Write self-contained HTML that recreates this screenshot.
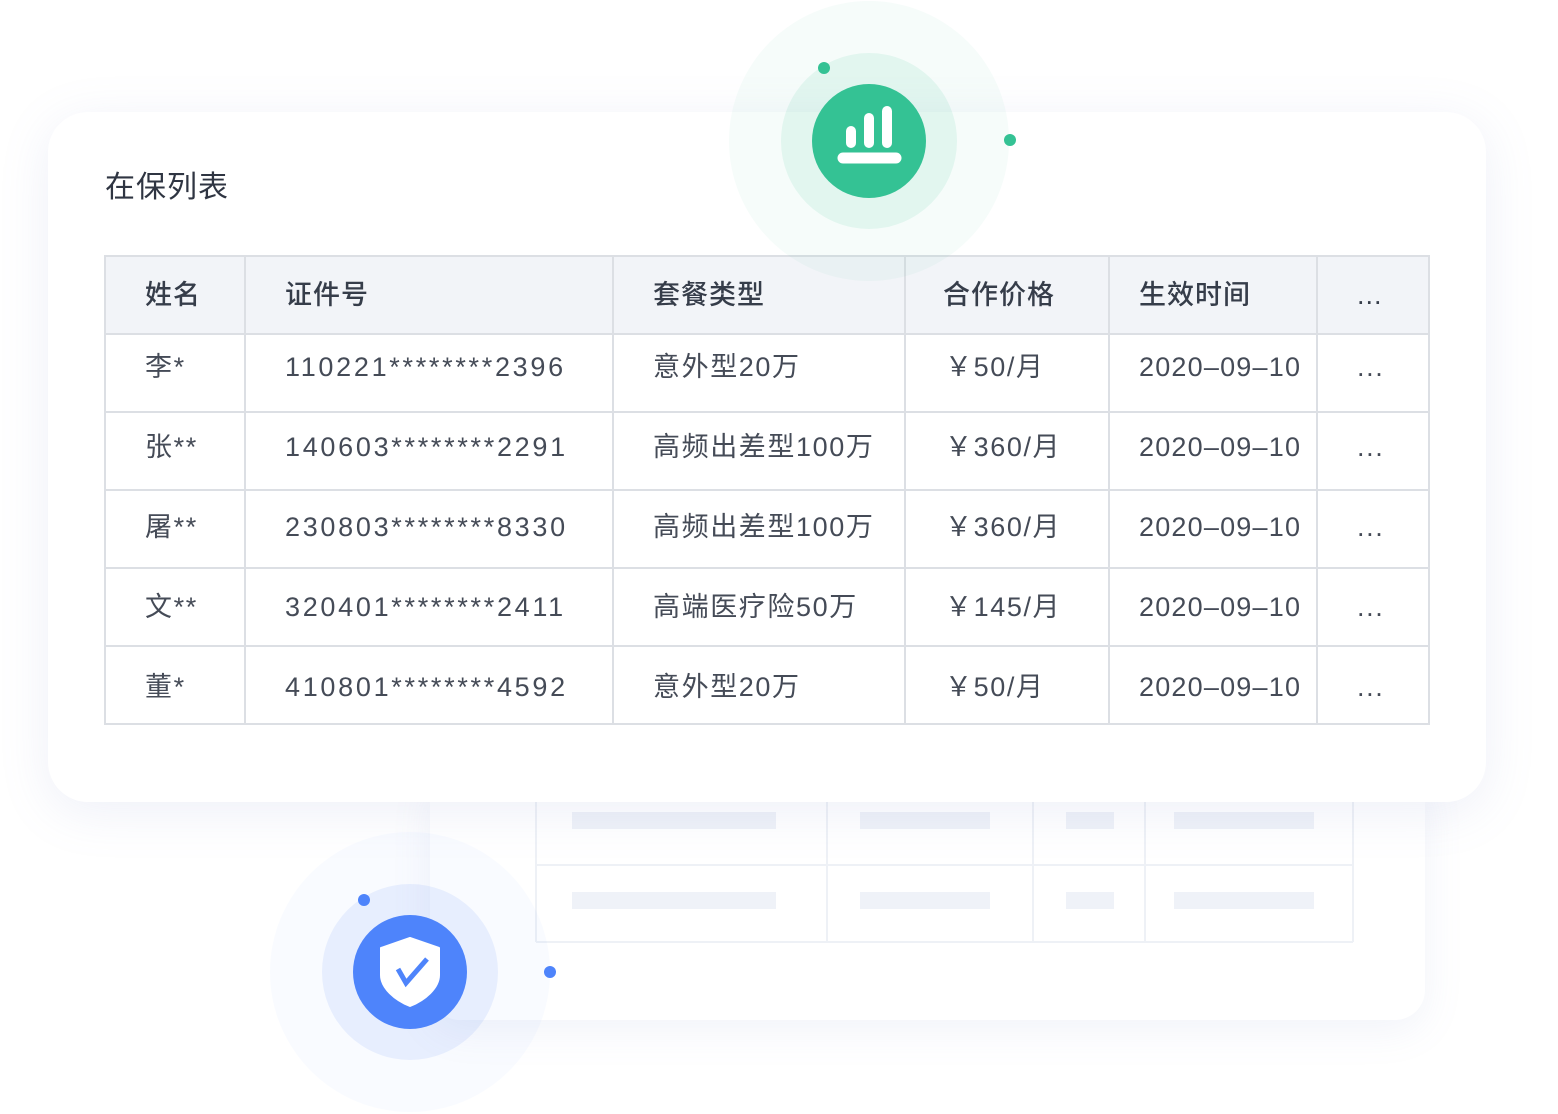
<!DOCTYPE html>
<html><head><meta charset="utf-8"><style>
*{margin:0;padding:0;box-sizing:border-box}
body{width:1558px;height:1114px;background:#fff;position:relative;overflow:hidden;font-family:"Liberation Sans","Noto Sans CJK SC",sans-serif;}
.abs{position:absolute}
.card{left:48px;top:112px;width:1438px;height:690px;background:#fff;border-radius:40px;box-shadow:0 10px 50px rgba(120,140,200,0.13)}
.back{left:430px;top:780px;width:995px;height:240px;background:#fff;border-radius:0 0 30px 30px;box-shadow:0 10px 40px rgba(120,140,200,0.10)}
.t{position:absolute;font-size:27px;color:#454b57;letter-spacing:1.6px;line-height:40px;white-space:nowrap}
.n{letter-spacing:2.7px}
.d{letter-spacing:1.2px}
.h{font-weight:500;color:#363d4a;letter-spacing:1px}
.bar{position:absolute;height:17px;background:#eff2f8}
</style></head><body>
<div class="abs back"></div>
<svg class="abs" style="left:0;top:0" width="1558" height="1114">
<g stroke="#eef1f6" stroke-width="2" fill="none">
<line x1="536" y1="800" x2="536" y2="942"/><line x1="827" y1="800" x2="827" y2="942"/>
<line x1="1033" y1="800" x2="1033" y2="942"/><line x1="1145" y1="800" x2="1145" y2="942"/>
<line x1="1353" y1="800" x2="1353" y2="942"/>
<line x1="536" y1="865" x2="1353" y2="865"/><line x1="536" y1="942" x2="1353" y2="942"/>
</g></svg>
<div class="bar" style="left:572px;top:812px;width:204px"></div>
<div class="bar" style="left:860px;top:812px;width:130px"></div>
<div class="bar" style="left:1066px;top:812px;width:48px"></div>
<div class="bar" style="left:1174px;top:812px;width:140px"></div>
<div class="bar" style="left:572px;top:892px;width:204px"></div>
<div class="bar" style="left:860px;top:892px;width:130px"></div>
<div class="bar" style="left:1066px;top:892px;width:48px"></div>
<div class="bar" style="left:1174px;top:892px;width:140px"></div>

<div class="abs card"></div>
<div class="t" style="left:105px;top:168px;font-size:30px;color:#2f3542;letter-spacing:1px">在保列表</div>

<svg class="abs" style="left:0;top:0" width="1558" height="1114">
<rect x="106" y="257" width="1322" height="77" fill="#f2f4f8"/>
<g stroke="#dcdfe4" stroke-width="2" fill="none">
<rect x="105" y="256" width="1324" height="468"/>
<line x1="105" y1="334" x2="1429" y2="334"/><line x1="105" y1="412" x2="1429" y2="412"/>
<line x1="105" y1="490" x2="1429" y2="490"/><line x1="105" y1="568" x2="1429" y2="568"/>
<line x1="105" y1="646" x2="1429" y2="646"/>
<line x1="245" y1="256" x2="245" y2="724"/><line x1="613" y1="256" x2="613" y2="724"/>
<line x1="905" y1="256" x2="905" y2="724"/><line x1="1109" y1="256" x2="1109" y2="724"/>
<line x1="1317" y1="256" x2="1317" y2="724"/>
</g></svg>

<div class="t h" style="left:145px;top:275px">姓名</div>
<div class="t h" style="left:285px;top:275px">证件号</div>
<div class="t h" style="left:653px;top:275px">套餐类型</div>
<div class="t h" style="left:943px;top:275px">合作价格</div>
<div class="t h" style="left:1139px;top:275px">生效时间</div>
<div class="t h" style="left:1357px;top:275px">...</div>

<div class="t" style="left:145px;top:347px">李*</div>
<div class="t n" style="left:285px;top:347px">110221********2396</div>
<div class="t" style="left:653px;top:347px">意外型20万</div>
<div class="t" style="left:945px;top:347px">￥50/月</div>
<div class="t d" style="left:1139px;top:347px">2020–09–10</div>
<div class="t" style="left:1357px;top:347px">...</div>

<div class="t" style="left:145px;top:427px">张**</div>
<div class="t n" style="left:285px;top:427px">140603********2291</div>
<div class="t" style="left:653px;top:427px">高频出差型100万</div>
<div class="t" style="left:945px;top:427px">￥360/月</div>
<div class="t d" style="left:1139px;top:427px">2020–09–10</div>
<div class="t" style="left:1357px;top:427px">...</div>

<div class="t" style="left:145px;top:507px">屠**</div>
<div class="t n" style="left:285px;top:507px">230803********8330</div>
<div class="t" style="left:653px;top:507px">高频出差型100万</div>
<div class="t" style="left:945px;top:507px">￥360/月</div>
<div class="t d" style="left:1139px;top:507px">2020–09–10</div>
<div class="t" style="left:1357px;top:507px">...</div>

<div class="t" style="left:145px;top:587px">文**</div>
<div class="t n" style="left:285px;top:587px">320401********2411</div>
<div class="t" style="left:653px;top:587px">高端医疗险50万</div>
<div class="t" style="left:945px;top:587px">￥145/月</div>
<div class="t d" style="left:1139px;top:587px">2020–09–10</div>
<div class="t" style="left:1357px;top:587px">...</div>

<div class="t" style="left:145px;top:667px">董*</div>
<div class="t n" style="left:285px;top:667px">410801********4592</div>
<div class="t" style="left:653px;top:667px">意外型20万</div>
<div class="t" style="left:945px;top:667px">￥50/月</div>
<div class="t d" style="left:1139px;top:667px">2020–09–10</div>
<div class="t" style="left:1357px;top:667px">...</div>

<svg class="abs" style="left:0;top:0" width="1558" height="1114">
<circle cx="869" cy="141" r="140" fill="rgba(52,194,148,0.045)"/>
<circle cx="869" cy="141" r="88" fill="rgba(52,194,148,0.10)"/>
<circle cx="869" cy="141" r="57" fill="#34c294"/>
<circle cx="824" cy="68" r="6" fill="#34c294"/>
<circle cx="1010" cy="140" r="6" fill="#34c294"/>
<g stroke="#fff" stroke-linecap="round" fill="none">
<line x1="851" y1="131" x2="851" y2="143" stroke-width="10"/>
<line x1="869" y1="118" x2="869" y2="143" stroke-width="10"/>
<line x1="887" y1="111" x2="887" y2="143" stroke-width="10"/>
<line x1="843" y1="158" x2="896" y2="158" stroke-width="11"/>
</g>
<circle cx="410" cy="972" r="140" fill="rgba(78,130,250,0.035)"/>
<circle cx="410" cy="972" r="88" fill="rgba(78,130,250,0.10)"/>
<circle cx="410" cy="972" r="57" fill="#4e84fb"/>
<circle cx="364" cy="900" r="6" fill="#4e84fb"/>
<circle cx="550" cy="972" r="6" fill="#4e84fb"/>
<path d="M410 938 L439 948 L439 975 C439 988 425 1000 410 1006 C395 1000 381 988 381 975 L381 948 Z" fill="#fff" stroke="#fff" stroke-width="2" stroke-linejoin="round"/>
<path d="M398 969 L406 983 L427 959" stroke="#4e84fb" stroke-width="5" fill="none"/>
</svg>
</body></html>
